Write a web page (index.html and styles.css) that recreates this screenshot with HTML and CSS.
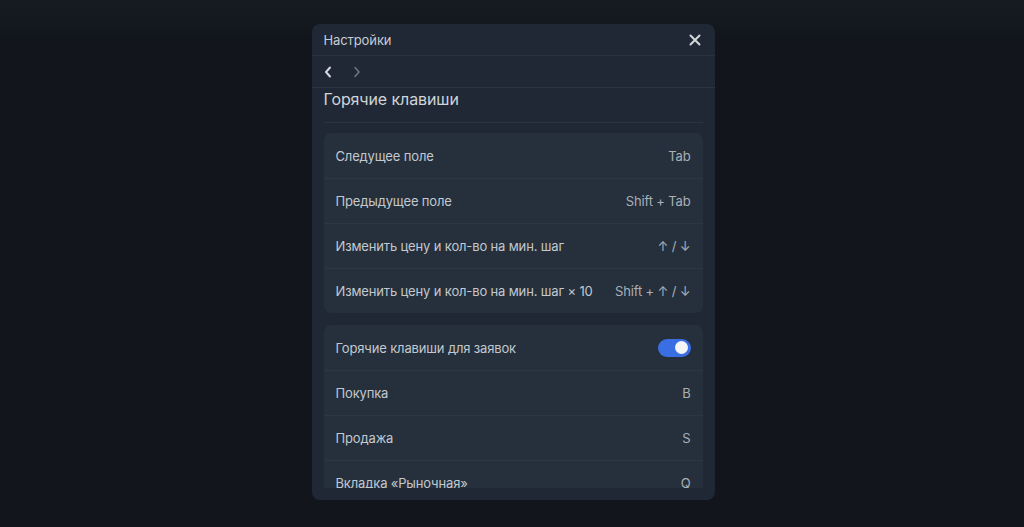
FILE: index.html
```html
<!DOCTYPE html>
<html lang="ru">
<head>
<meta charset="utf-8">
<title>Настройки</title>
<link rel="stylesheet" href="styles.css">
</head>
<body>
<div class="backdrop">
  <div class="modal">
    <div class="modal-header">
      <span class="modal-title">Настройки</span>
      <button class="close" aria-label="Закрыть">
        <svg width="12" height="12" viewBox="0 0 12 12"><path d="M1.5 1.5 L10.5 10.5 M10.5 1.5 L1.5 10.5" stroke="currentColor" stroke-width="2" stroke-linecap="round"/></svg>
      </button>
    </div>
    <div class="modal-nav">
      <span class="nav-btn active">
        <svg width="8" height="12" viewBox="0 0 8 12"><path d="M6 1.5 L2 6 L6 10.5" fill="none" stroke="currentColor" stroke-width="2" stroke-linecap="round" stroke-linejoin="round"/></svg>
      </span>
      <span class="nav-btn">
        <svg width="8" height="12" viewBox="0 0 8 12"><path d="M2 1.5 L6 6 L2 10.5" fill="none" stroke="currentColor" stroke-width="1.6" stroke-linecap="round" stroke-linejoin="round"/></svg>
      </span>
    </div>
    <div class="modal-body">
      <h2 class="section-title">Горячие клавиши</h2>
      <div class="card">
        <div class="row"><span class="label">Следущее поле</span><span class="value">Tab</span></div>
        <div class="row"><span class="label">Предыдущее поле</span><span class="value">Shift + Tab</span></div>
        <div class="row"><span class="label">Изменить цену и кол-во на мин. шаг</span><span class="value">↑ / ↓</span></div>
        <div class="row"><span class="label">Изменить цену и кол-во на мин. шаг × 10</span><span class="value">Shift + ↑ / ↓</span></div>
      </div>
      <div class="card">
        <div class="row"><span class="label">Горячие клавиши для заявок</span><span class="toggle on"><span class="knob"></span></span></div>
        <div class="row"><span class="label">Покупка</span><span class="value">B</span></div>
        <div class="row"><span class="label">Продажа</span><span class="value">S</span></div>
        <div class="row"><span class="label">Вкладка «Рыночная»</span><span class="value">Q</span></div>
      </div>
    </div>
  </div>
</div>
</body>
</html>
```

FILE: styles.css
```css
* { box-sizing: border-box; }
html, body { margin: 0; padding: 0; }
body {
  background: #13171e;
  font-family: Inter, "Noto Sans", "Liberation Sans", sans-serif;
  color: #c5cad1;
}
.backdrop {
  height: 527px;
  display: flex;
  justify-content: center;
  padding-top: 24px;
  padding-left: 2px;
  background: linear-gradient(#161b22, #12161c 40px, #12161c);
}
.modal {
  width: 403px;
  height: 476px;
  background: #1f2834;
  border-radius: 8px;
  display: flex;
  flex-direction: column;
  padding-bottom: 12px;
  overflow: hidden;
}
.modal-header {
  height: 32px;
  flex: none;
  display: flex;
  align-items: center;
  justify-content: space-between;
  padding: 0 12px 0 12px;
  border-bottom: 1px solid rgba(255,255,255,0.05);
}
.modal-title {
  font-size: 13px;
  color: #c8ccd2;
  padding-top: 1px;
  letter-spacing: -0.1px;
}
.close {
  background: none;
  border: 0;
  padding: 0;
  margin-right: 2px;
  color: #d3d7dc;
  display: flex;
  cursor: pointer;
}
.modal-nav {
  height: 32px;
  flex: none;
  display: flex;
  align-items: center;
  gap: 21px;
  padding: 0 0 0 12px;
  border-bottom: 1px solid rgba(255,255,255,0.06);
}
.nav-btn { display: flex; color: #6c7581; }
.nav-btn.active { color: #d4d8dd; }
.modal-body {
  flex: 1;
  overflow: hidden;
  padding: 0 12px;
}
.section-title {
  margin: 0 0 10px;
  height: 35px;
  font-size: 16px;
  font-weight: 400;
  color: #d0d4d9;
  line-height: 22px;
  letter-spacing: -0.1px;
  border-bottom: 1px solid rgba(255,255,255,0.06);
}
.card {
  background: #25303c;
  border-radius: 7px;
  margin-bottom: 12px;
}
.row {
  height: 45px;
  display: flex;
  align-items: center;
  justify-content: space-between;
  padding: 0 12px;
  font-size: 13px;
  letter-spacing: -0.15px;
  border-top: 1px solid rgba(255,255,255,0.035);
}
.row:first-child { border-top: 0; }
.label { color: #c3c8cf; }
.value { color: #a9afb7; }
.toggle {
  width: 33px;
  height: 18px;
  border-radius: 9px;
  background: #3a6ee3;
  display: flex;
  align-items: center;
  justify-content: flex-end;
  padding: 0 3px;
}
.knob {
  width: 13px;
  height: 13px;
  border-radius: 50%;
  background: #f4f6f8;
}
```
